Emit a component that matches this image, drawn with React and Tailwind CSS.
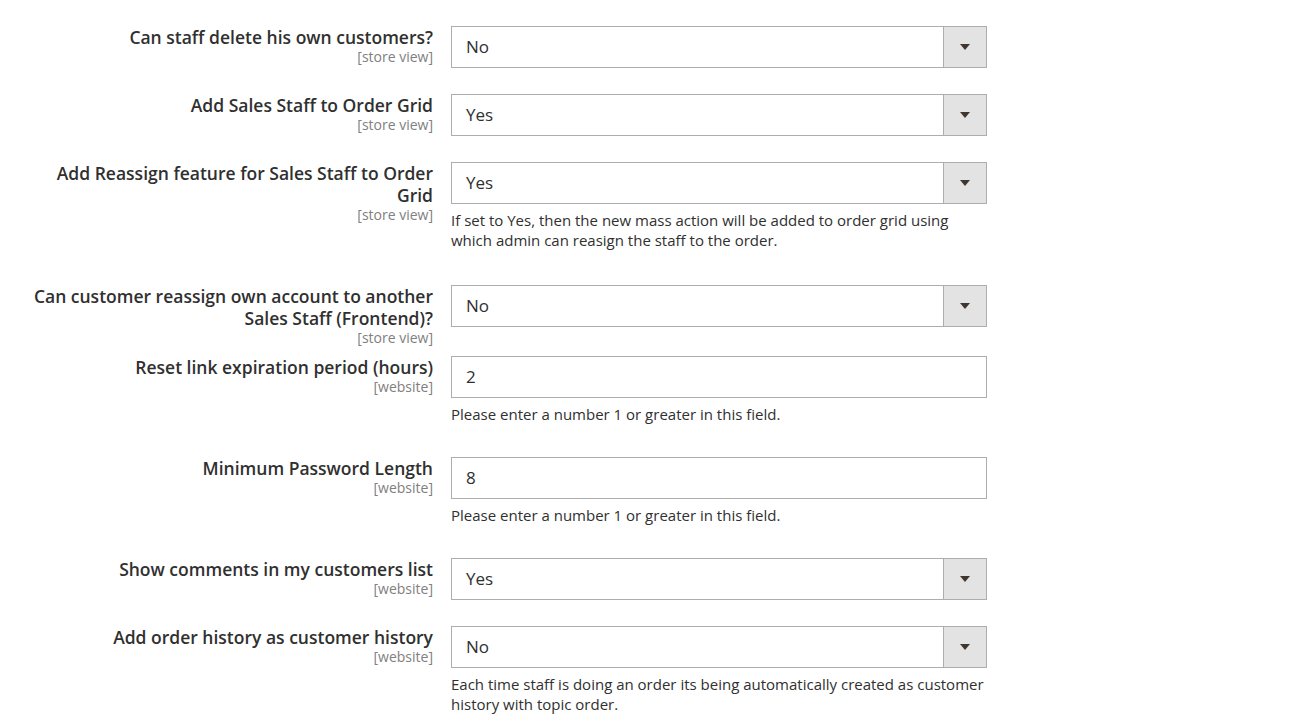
import React from 'react';

const rows = [
  { label: 'Can staff delete his own customers?', scope: '[store view]', type: 'select', value: 'No', h: 'h-[68px]' },
  { label: 'Add Sales Staff to Order Grid', scope: '[store view]', type: 'select', value: 'Yes', h: 'h-[68px]' },
  {
    label: 'Add Reassign feature for Sales Staff to Order Grid',
    scope: '[store view]',
    type: 'select',
    value: 'Yes',
    note: 'If set to Yes, then the new mass action will be added to order grid using which admin can reasign the staff to the order.',
    h: 'h-[123px]',
  },
  { label: 'Can customer reassign own account to another Sales Staff (Frontend)?', scope: '[store view]', type: 'select', value: 'No', h: 'h-[71px]' },
  {
    label: 'Reset link expiration period (hours)',
    scope: '[website]',
    type: 'text',
    value: '2',
    note: 'Please enter a number 1 or greater in this field.',
    h: 'h-[101px]',
  },
  {
    label: 'Minimum Password Length',
    scope: '[website]',
    type: 'text',
    value: '8',
    note: 'Please enter a number 1 or greater in this field.',
    h: 'h-[101px]',
  },
  { label: 'Show comments in my customers list', scope: '[website]', type: 'select', value: 'Yes', h: 'h-[68px]' },
  {
    label: 'Add order history as customer history',
    scope: '[website]',
    type: 'select',
    value: 'No',
    note: 'Each time staff is doing an order its being automatically created as customer history with topic order.',
    h: 'h-[100px]',
  },
];

/* Caja de valor: select o input de texto */
const Campo = ({ type, value }) => (
  <div className="flex h-[42px] w-[536px] border border-[#adadad] bg-white">
    <div className="flex flex-1 items-center pl-[14px] text-[17px] text-[#303030]">{value}</div>
    {type === 'select' && (
      <div className="flex w-[43px] items-center justify-center border-l border-[#adadad] bg-[#e3e3e3]">
        <svg width="10" height="6" viewBox="0 0 10 6">
          <path d="M0 0 L10 0 L5 6 Z" fill="#41362f" />
        </svg>
      </div>
    )}
  </div>
);

export default function App() {
  return (
    <div
      className="min-h-[726px] bg-white pt-[26px]"
      style={{ fontFamily: '"Open Sans", "Noto Sans", sans-serif' }}
    >
      {rows.map((row, i) => (
        <div key={i} className={`flex items-start ${row.h}`}>
          <div className="w-[433px] shrink-0 pl-[28px] text-right">
            <div className="text-[17.5px] font-semibold leading-[22px] text-[#303030]">{row.label}</div>
            <div className="text-[14px] leading-[18px] text-[#808080]">{row.scope}</div>
          </div>
          <div className="ml-[18px]">
            <Campo type={row.type} value={row.value} />
            {row.note && (
              <p className="mt-[6px] w-[536px] text-[15px] leading-[20px] text-[#303030]">{row.note}</p>
            )}
          </div>
        </div>
      ))}
    </div>
  );
}
